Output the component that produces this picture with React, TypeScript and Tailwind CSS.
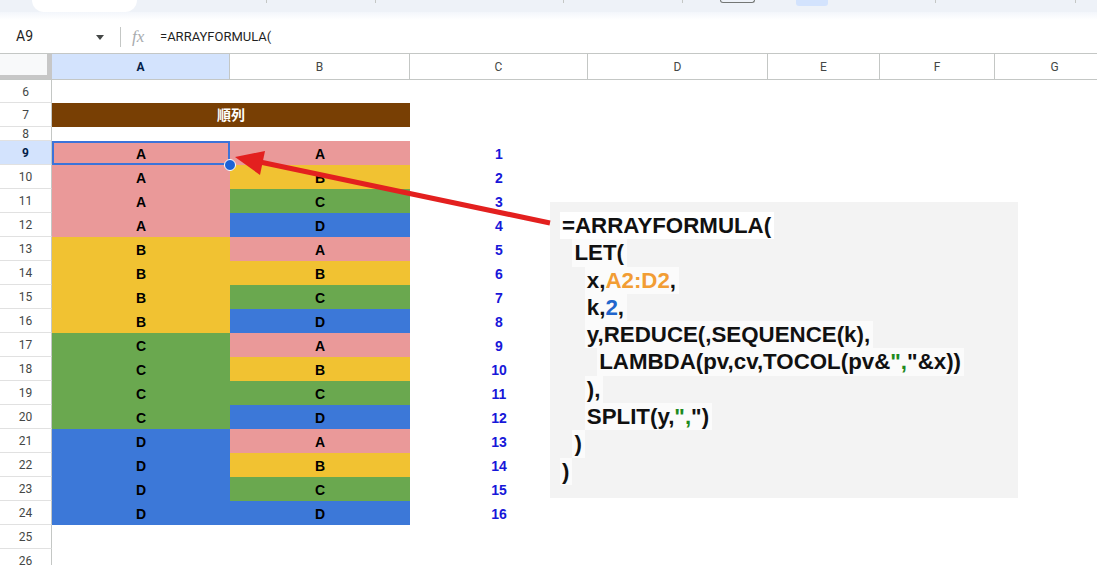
import React from 'react';

const colWidths = [178, 180, 178, 180, 112, 115, 120];
const colLetters = ['A', 'B', 'C', 'D', 'E', 'F', 'G'];
const letters = ['A', 'B', 'C', 'D'];

const fill: Record<string, string> = {
  A: 'bg-[#ea9999]',
  B: 'bg-[#f1c232]',
  C: 'bg-[#6aa84f]',
  D: 'bg-[#3c78d8]',
};

const rows: { n: number; h: string }[] = [
  { n: 6, h: 'h-[23px]' },
  { n: 7, h: 'h-[24px]' },
  { n: 8, h: 'h-[14px]' },
  ...Array.from({ length: 18 }, (_, i) => ({ n: 9 + i, h: 'h-[24px]' })),
];

const RowHeader = ({ n }: { n: number }) => {
  const selected = n === 9;
  return (
    <div
      className={`w-[52px] shrink-0 h-full flex items-center justify-center overflow-hidden border-r border-r-[#c4c7c5] border-b border-b-[#e1e1e1] font-['Roboto',Arial,sans-serif] text-[12px] pt-[1px] ${
        selected ? 'bg-[#d3e3fd] text-[#041e49] font-bold' : 'text-[#444746]'
      }`}
    >
      {n}
    </div>
  );
};

const Cell = ({ children, className = '', w }: { children?: React.ReactNode; className?: string; w: number }) => (
  <div
    className={`shrink-0 h-full flex items-center justify-center pt-[3px] text-[14px] font-bold ${className}`}
    style={{ width: w }}
  >
    {children}
  </div>
);

const DataRow = ({ n }: { n: number }) => {
  if (n === 7) {
    return (
      <div className="w-[358px] h-full flex items-center justify-center pt-[1px] bg-[#783f04] text-white text-[14px] font-bold font-['Liberation_Sans','Noto_Sans_CJK_JP',sans-serif]">
        順列
      </div>
    );
  }
  if (n < 9 || n > 24) return null;
  const i = n - 9;
  const a = letters[Math.floor(i / 4)];
  const b = letters[i % 4];
  return (
    <>
      <Cell w={178} className={`${fill[a]} relative text-black`}>
        {a}
        {n === 9 && (
          <>
            <div className="absolute inset-0 border-2 border-[#3b73d9]" />
            <div className="absolute right-[-6px] bottom-[-6px] w-[12px] h-[12px] rounded-full bg-[#1a62d6] border-[1.5px] border-white z-10" />
          </>
        )}
      </Cell>
      <Cell w={180} className={`${fill[b]} text-black`}>
        {b}
      </Cell>
      <Cell w={178} className="text-[#1717d9]">
        {i + 1}
      </Cell>
    </>
  );
};

const code: React.ReactNode[] = [
  <>=ARRAYFORMULA(</>,
  <>LET(</>,
  <>
    x,<span className="text-[#f29d34]">A2:D2</span>,
  </>,
  <>
    k,<span className="text-[#2266cc]">2</span>,
  </>,
  <>y,REDUCE(,SEQUENCE(k),</>,
  <>
    LAMBDA(pv,cv,TOCOL(pv&amp;<span className="text-[#1e8a1e]">",</span>"&amp;x))
  </>,
  <>),</>,
  <>
    SPLIT(y,<span className="text-[#1e8a1e]">",</span>")
  </>,
  <>)</>,
  <>)</>,
];
const indents = ['', '  ', '    ', '    ', '    ', '      ', '    ', '    ', '  ', ''];

export default function App() {
  return (
    <div className="relative w-[1097px] h-[565px] overflow-hidden bg-white font-['Liberation_Sans',Arial,sans-serif] text-[#1f1f1f]">
      {/* toolbar remnants */}
      <div className="h-[12px] bg-[#eef2f8] flex items-start">
        <div className="ml-[32px] w-[105px] h-[12px] bg-white rounded-b-[12px]" />
        <div className="ml-[129px] w-px h-[3px] bg-[#c4c7c5]" />
        <div className="ml-[108px] w-px h-[3px] bg-[#c4c7c5]" />
        <div className="ml-[187px] w-px h-[3px] bg-[#c4c7c5]" />
        <div className="ml-[118px] w-px h-[3px] bg-[#c4c7c5]" />
        <div className="ml-[37px] w-[35px] h-[3px] border border-t-0 border-[#747775] rounded-b-[3px]" />
        <div className="ml-[41px] w-[32px] h-[6px] bg-[#d3e3fd] rounded-b-[3px]" />
        <div className="ml-[107px] w-px h-[3px] bg-[#c4c7c5]" />
        <div className="ml-[139px] w-px h-[3px] bg-[#c4c7c5]" />
      </div>
      <div className="h-[8px] bg-linear-to-b from-[#f3f6fb] to-white" />

      {/* formula bar */}
      <div className="h-[33px] flex items-center font-['Roboto',Arial,sans-serif]">
        <span className="ml-[16px] w-[80px] text-[14px] text-[#1f1f1f]">A9</span>
        <svg width="8" height="5" viewBox="0 0 8 5" className="mt-[1px]">
          <path d="M0 0h8L4 5z" fill="#444746" />
        </svg>
        <div className="ml-[16px] w-px h-[20px] bg-[#c4c7c5]" />
        <span className="ml-[11px] w-[17px] italic text-[17px] text-[#a8abae] font-['Liberation_Serif',serif] leading-none">
          fx
        </span>
        <span className="ml-[11px] text-[13px] text-[#1f1f1f]">=ARRAYFORMULA(</span>
      </div>

      {/* column headers */}
      <div className="h-[27px] flex border-t border-b border-[#c4c7c5] font-['Roboto',Arial,sans-serif] text-[12px]">
        <div className="w-[52px] shrink-0 h-full bg-[#f8f9fa] border-r-[5px] border-b-[4px] border-[#c7c7c7]" />
        {colLetters.map((c, i) => (
          <div
            key={c}
            className={`shrink-0 h-full flex items-center justify-center border-r border-[#c4c7c5] ${
              c === 'A' ? 'bg-[#d3e3fd] text-[#041e49] font-bold' : 'text-[#444746]'
            }`}
            style={{ width: colWidths[i] }}
          >
            {c}
          </div>
        ))}
      </div>

      {/* rows */}
      <div className="flex flex-col">
        {rows.map((r) => (
          <div key={r.n} className={`flex ${r.h}`}>
            <RowHeader n={r.n} />
            <DataRow n={r.n} />
          </div>
        ))}
      </div>

      {/* floating formula image */}
      <div className="absolute left-[550px] top-[202px] w-[468px] h-[296px] bg-[#f3f3f3] pt-[10px] pl-[10px] text-[22.3px] font-bold text-[#111] leading-[27.3px]">
        {code.map((line, i) => (
          <div key={i} className="whitespace-pre">
            {indents[i]}
            <span className={`inline-block pl-[2px] pr-[3px] ${i === 0 ? 'bg-white' : 'bg-[#fbfbfb]'}`}>{line}</span>
          </div>
        ))}
      </div>

      {/* arrow */}
      <svg className="absolute inset-0 pointer-events-none" width="1097" height="565" viewBox="0 0 1097 565">
        <line x1="550" y1="223" x2="260" y2="162" stroke="#e3201f" strokeWidth="5" />
        <polygon points="235,157 265,151 260,175" fill="#e3201f" />
      </svg>
    </div>
  );
}
